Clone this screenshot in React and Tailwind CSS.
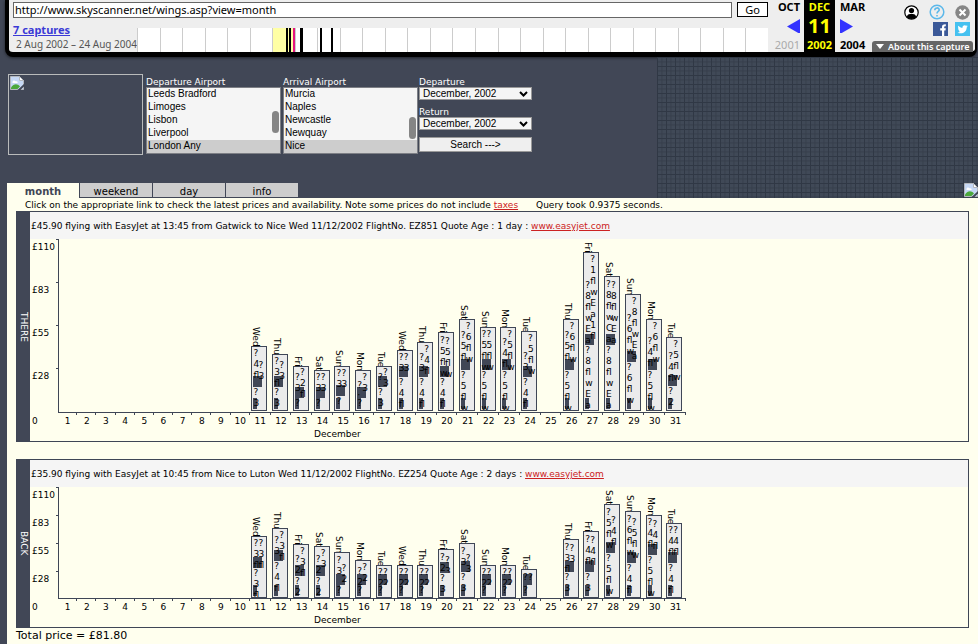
import React from "react";
import clsx from "clsx";

// left / right: [offset of the first line, lines]; foot: height below the dark block
const THERE = [
  { day: 11, name: "Wed", h: 65, left: [7, "? 4 fl"], right: [19, "? 3"], foot: 24, low: "? 3" },
  { day: 12, name: "Thu", h: 57, left: [7, "? 3 fl"], right: [11, "? 3"], foot: 24, low: "? 3" },
  { day: 13, name: "Fri", h: 45, left: [11, "? 3"], right: [6, "? 2 fl"], foot: 13, low: "?" },
  { day: 14, name: "Sat", h: 41, left: [7, "? 3"], right: [7, "? 3"], foot: 13, low: "?" },
  { day: 15, name: "Sun", h: 45, left: [7, "? 3"], right: [7, "? 3"], foot: 15, low: "?" },
  { day: 16, name: "Mon", h: 41, left: [15, "? :"], right: [7, "? 3"], foot: 13, low: "?" },
  { day: 17, name: "Tue", h: 45, left: [11, "? :"], right: [6, "? 3"], foot: 24, low: "? 3" },
  { day: 18, name: "Wed", h: 61, left: [7, "? 3"], right: [7, "? 3"], foot: 34, low: "? 4 fl" },
  { day: 19, name: "Thu", h: 69, left: [15, "? 3"], right: [7, "? 4 fl"], foot: 34, low: "? 4 fl" },
  { day: 20, name: "Fri", h: 79, left: [8, "? 5 fl w"], right: [9, "? 5 fl w"], foot: 34, low: "? 4 fl" },
  { day: 21, name: "Sat", h: 92, left: [16, "? 5 fl"], right: [7, "? 6 fl w"], foot: 41, low: "? 5 fl w" },
  { day: 22, name: "Sun", h: 84, left: [7, "? 5 fl w"], right: [7, "? 5 fl w"], foot: 41, low: "? 5 fl w" },
  { day: 23, name: "Mon", h: 84, left: [15, "? 4 fl"], right: [7, "? 5 fl w"], foot: 41, low: "? 5 fl w" },
  { day: 24, name: "Tue", h: 80, left: [25, "? 3"], right: [7, "? 5 fl w"], foot: 34, low: "? 4 fl" },
  { day: 26, name: "Thu", h: 92, left: [16, "? 5 fl"], right: [7, "? 6 fl w"], foot: 41, low: "? 5 fl w" },
  { day: 27, name: "Fri", h: 159, left: [33, "? 8 fl w E a"], right: [7, "? 1 fl w E a 1 fl"], foot: 66, low: "? 8 fl w E a" },
  { day: 28, name: "Sat", h: 135, left: [8, "? 8 fl w C a"], right: [9, "? 8 fl w E a"], foot: 66, low: "? 8 fl w E a" },
  { day: 29, name: "Sun", h: 117, left: [24, "? 6 fl w"], right: [7, "? 8 fl w E a"], foot: 49, low: "? 6 fl w" },
  { day: 30, name: "Mon", h: 92, left: [22, "? 4 fl"], right: [7, "? 6 fl w"], foot: 41, low: "? 5 fl w" },
  { day: 31, name: "Tue", h: 74, left: [19, "? 4 fl"], right: [7, "? 5 fl w"], foot: 25, low: "? 2" },
];

const BACK = [
  { day: 11, name: "Wed", h: 62, left: [7, "? 3 fl"], right: [7, "? 3 fl"], foot: 30, low: "? 3 fl" },
  { day: 12, name: "Thu", h: 70, left: [12, "? 3"], right: [7, "? 3 fl"], foot: 37, low: "? 4 fl" },
  { day: 13, name: "Fri", h: 54, left: [15, "? 2"], right: [7, "? 3 fl"], foot: 22, low: "? 2" },
  { day: 14, name: "Sat", h: 52, left: [13, "? 2"], right: [7, "? 3"], foot: 22, low: "? 2" },
  { day: 15, name: "Sun", h: 46, left: [8, "? 3"], right: [16, "? 2"], foot: 13, low: "?" },
  { day: 16, name: "Mon", h: 38, left: [11, "? 2"], right: [7, "? 2"], foot: 13, low: "?" },
  { day: 17, name: "Tue", h: 33, left: [7, "? 2"], right: [7, "? 2"], foot: 13, low: "?" },
  { day: 18, name: "Wed", h: 33, left: [7, "? 2"], right: [7, "? 2"], foot: 13, low: "?" },
  { day: 19, name: "Thu", h: 33, left: [7, "? 2"], right: [7, "? 2"], foot: 13, low: "?" },
  { day: 20, name: "Fri", h: 49, left: [8, "? 2"], right: [11, "? 3"], foot: 25, low: "? 3" },
  { day: 21, name: "Sat", h: 55, left: [8, "? 3"], right: [15, "? 3"], foot: 26, low: "? 3" },
  { day: 22, name: "Sun", h: 33, left: [7, "? 2"], right: [7, "? 2"], foot: 13, low: "?" },
  { day: 23, name: "Mon", h: 33, left: [7, "? 2"], right: [7, "? 2"], foot: 13, low: "?" },
  { day: 24, name: "Tue", h: 29, left: [8, "?"], right: [8, "?"], foot: 13, low: "?" },
  { day: 26, name: "Thu", h: 59, left: [8, "? 3 fl"], right: [9, "? 3"], foot: 26, low: "? 3" },
  { day: 27, name: "Fri", h: 67, left: [8, "? 4 fl"], right: [9, "? 4 fl"], foot: 26, low: "? 3" },
  { day: 28, name: "Sat", h: 94, left: [8, "? 5 fl w"], right: [16, "? 4 fl"], foot: 45, low: "? 5 fl w" },
  { day: 29, name: "Sun", h: 87, left: [8, "? 6 fl w"], right: [11, "? 5 fl w"], foot: 35, low: "? 4 fl" },
  { day: 30, name: "Mon", h: 83, left: [7, "? 4 fl"], right: [9, "? 4 fl"], foot: 43, low: "? 5 fl w" },
  { day: 31, name: "Tue", h: 75, left: [7, "? 4 fl"], right: [7, "? 4 fl"], foot: 35, low: "? 4 fl" },
];

const DAYS = Array.from({ length: 31 }, (_, i) => i + 1);
const YEARS = Array.from({ length: 28 }, (_, i) => 1996 + i);

const BrokenImage = () => (
  <svg width="16" height="16" viewBox="0 0 16 16" aria-hidden="true">
    <path d="M1.500 1.500h9l4 4v9h-13z" fill="#c6d8f5" stroke="#b4b8be" />
    <path d="M3.500 7.500c0-2 2-2.500 3-1.200 1.800-.6 2.500.7 2 1.700h-5z" fill="#fff" />
    <path d="M2 14v-1.500c3-4.500 6.500-4 9-1L8.500 14z" fill="#4ba83c" />
    <path d="M10.500 1.500v4h4z" fill="#fff" stroke="#b4b8be" />
    <path d="M8 15.500l7.500-7v2.500L11 15.500z" fill="#414756" />
  </svg>
);

const Lines = ({ text, top = 0, className }) => (
  <div className={clsx("absolute top-0 leading-[11px]", className)} style={{ paddingTop: top }}>
    {text.split(" ").map((t, i) => (
      <div key={i} className="h-[11px]">{t}</div>
    ))}
  </div>
);

const Bar = ({ bar }) => (
  <div className="flex flex-col items-start">
    <span className="-mb-px leading-[11px] [writing-mode:vertical-rl]">{bar.name}</span>
    <div
      className="ml-px flex w-4 flex-col border border-[#3f4656] bg-[#ebebeb]"
      style={{ height: bar.h }}
    >
      <div className="relative flex-1 overflow-hidden">
        <div className="absolute bottom-0 left-px h-[11px] w-[9px] bg-[#414756]" />
        <Lines text={bar.left[1]} top={bar.left[0] - 6} className="left-px" />
        <Lines text={bar.right[1]} top={bar.right[0] - 6} className="left-[6px]" />
      </div>
      <div className="relative overflow-hidden" style={{ height: bar.foot - 1 }}>
        <div className="absolute bottom-px left-px h-[11px] w-1 bg-[#414756]" />
        <Lines text={bar.low} className="left-px" />
      </div>
    </div>
  </div>
);

const days = "grid w-[628px] grid-cols-[repeat(10,12fr)_repeat(21,13fr)]";

const Chart = ({ side, summary, bars, row, plot }) => (
  <section className="mx-[9px] flex border border-[#3f4656]">
    <h2 className="flex w-[13px] items-center justify-center bg-[#414756] text-white">
      <span className="leading-[13px] [writing-mode:vertical-rl]">{side}</span>
    </h2>
    <div className="min-w-0 flex-1">
      <p className="h-[27px] bg-[#f5f5f5] pl-px leading-[28px] whitespace-nowrap">
        {summary}{" "}
        <a href="#easyjet" className="text-[#cc2222] underline">www.easyjet.com</a>
      </p>
      <div className="flex">
        <div className="w-[26px] pl-[2px]">
          {["£110", "£83", "£55", "£28"].map((p) => (
            <div key={p} className={clsx("pt-[2px] leading-[12px]", row)}>{p}</div>
          ))}
        </div>
        <div className="w-[2px]">
          {[1, 2, 3, 4].map((n) => (
            <div key={n} className={clsx("border-t border-[#3f4656]", row)} />
          ))}
        </div>
        <div className={clsx(days, "items-end border-b border-l border-[#3f4656]", plot)}>
          {DAYS.map((d) => {
            const bar = bars.find((b) => b.day === d);
            return bar ? <Bar key={d} bar={bar} /> : <span key={d} />;
          })}
        </div>
      </div>
      <div className="flex">
        <span className="w-[28px] pt-[2px] pl-[2px] leading-[12px]">0</span>
        <div className={clsx(days, "leading-[12px]")}>
          {DAYS.map((d) => (
            <div key={d} className="text-center">
              <div className="ml-auto h-[2px] w-px bg-[#3f4656]" />
              <div>{d}</div>
            </div>
          ))}
        </div>
      </div>
      <div className="ml-[28px] h-[14px] w-[620px] pl-[256px] leading-[14px]">December</div>
    </div>
  </section>
);

const Airports = ({ id, label, options, thumb }) => (
  <div>
    <label htmlFor={id} className="block h-[13px] pt-px leading-[14px] text-white">{label}</label>
    <div className="relative">
      <select
        id={id}
        size={5}
        defaultValue={options[4]}
        className="block h-[67px] w-[135px] appearance-none overflow-hidden border border-[#7d7f85] bg-[#f5f5f5] font-['Liberation_Sans',sans-serif] text-[10px] text-black [scrollbar-width:none]"
      >
        {options.map((o) => (
          <option key={o} className="h-[13px] min-h-0 p-0 pl-px leading-[12px] checked:bg-[#cdcdcd] checked:bg-none checked:text-black">
            {o}
          </option>
        ))}
      </select>
      <span className={clsx("absolute right-[2px] h-[22px] w-[7px] rounded-full bg-[#858585]", thumb)} />
    </div>
  </div>
);

const Month = ({ id, label }) => (
  <div>
    <label htmlFor={id} className="block h-[13px] pt-px leading-[14px] text-white">{label}</label>
    <div className="relative">
      <select
        id={id}
        className="block h-[13px] w-[113px] appearance-none border border-[#999] bg-[#f5f5f5] pl-[3px] font-['Liberation_Sans',sans-serif] text-[10px] leading-[11px] text-black"
      >
        <option>December, 2002</option>
      </select>
      <svg className="pointer-events-none absolute top-1 right-1" width="9" height="6" viewBox="0 0 9 6">
        <path d="M1 1l3.500 3.500L8 1" fill="none" stroke="#000" strokeWidth="2" />
      </svg>
    </div>
  </div>
);

const Marks = () => (
  <svg className="absolute inset-0" width="225" height="24">
    <rect x="149" width="2" height="24" />
    <rect x="152" width="2" height="24" />
    <rect x="156" width="2" height="24" fill="#e6157f" />
    <rect x="163" width="3" height="24" />
    <rect x="183" width="2" height="24" />
    <rect x="194" width="2" height="24" />
  </svg>
);

const ArchiveBar = () => (
  <header className="mr-px ml-[5px] flex h-[57px] rounded-b-lg border-x-4 border-r-2 border-b-[5px] border-black bg-[#eee] font-['Noto_Sans',sans-serif] shadow-[0_1px_3px_#0008]">
    <div className="min-w-0 flex-1">
      <form className="flex gap-[5px] pt-[2px] pl-1">
        <input
          aria-label="Address"
          defaultValue="http://www.skyscanner.net/wings.asp?view=month"
          className="h-4 min-w-0 flex-1 border border-[#666] bg-white pl-px text-[11px] text-black"
        />
        <button type="button" className="h-[15px] w-[31px] border border-black bg-white text-[11px] leading-[13px]">Go</button>
      </form>
      <div className="flex">
        <div className="w-[128px] pt-[5px] pl-1 whitespace-nowrap">
          <a href="#captures" className="block text-[11px] leading-[14px] font-bold text-[#3a3ad6] underline">7 captures</a>
          <p className="pl-[3px] text-[10px] leading-[15px] text-[#555]">2 Aug 2002 – 24 Aug 2004</p>
        </div>
        <div className="relative mt-[10px] flex h-6 flex-1">
          {YEARS.map((y) => (
            <span key={y} className={clsx("flex-1 border-l border-[#ccc]", y === 2002 ? "bg-[#ffffa5]" : "bg-white")} />
          ))}
          <Marks />
        </div>
      </div>
    </div>
    <div className="flex w-[207px] text-[11px] leading-[14px] font-bold">
      <div className="flex w-9 flex-col items-end pr-1">
        <span>OCT</span>
        <svg className="my-[5px]" width="13" height="15"><path d="M13 0v15L0 7.500z" fill="#3333ff" /></svg>
        <span className="font-normal text-[#aaa]">2001</span>
      </div>
      <div className="-mb-px flex w-[31px] flex-col items-center bg-black text-[#ff0]">
        <span>DEC</span>
        <span className="text-[20px] leading-[24px]">11</span>
        <span>2002</span>
      </div>
      <div className="flex w-9 flex-col pl-[5px]">
        <span>MAR</span>
        <svg className="my-[5px]" width="13" height="15"><path d="M0 0v15l13-7.500z" fill="#3333ff" /></svg>
        <span>2004</span>
      </div>
      <div className="flex flex-1 flex-col items-end justify-between">
        <div className="flex flex-col items-end gap-[2px] pt-1 pr-[5px]">
          <div className="flex gap-[10px]">
            <button type="button" aria-label="Account">
              <svg width="15" height="15" viewBox="0 0 15 15">
                <circle cx="7.500" cy="7.500" r="6.700" fill="#fff" stroke="#000" strokeWidth="1.200" />
                <circle cx="7.500" cy="5.600" r="2.600" />
                <path d="M2.800 12c.5-2.400 2-3 3.200-3h3c1.200 0 2.700.6 3.200 3-2.400 2.600-7 2.600-9.400 0z" />
              </svg>
            </button>
            <button type="button" aria-label="Help">
              <svg width="16" height="16" viewBox="0 0 16 16">
                <circle cx="8" cy="8" r="6.800" fill="none" stroke="#5cb8ea" strokeWidth="1.500" />
                <path d="M5.800 6.200c0-3 4.400-3 4.400-.2C10.200 7.500 8 7.500 8 9.500M8 11v1.400" fill="none" stroke="#5cb8ea" strokeWidth="1.600" />
              </svg>
            </button>
            <button type="button" aria-label="Close">
              <svg width="15" height="15" viewBox="0 0 15 15">
                <circle cx="7.500" cy="7.500" r="7.200" fill="#868686" />
                <path d="M4.500 4.500l6 6M10.500 4.500l-6 6" stroke="#fff" strokeWidth="2" />
              </svg>
            </button>
          </div>
          <div className="flex gap-[7px]">
            <a href="#facebook" aria-label="Facebook">
              <svg width="15" height="14" viewBox="0 0 15 14">
                <path d="M0 0h15v14H0z" fill="#3b5998" />
                <path d="M9 14V8.500H7.200V6.300H9V5c0-2 1.200-3 3.800-2.800v2C11.500 4.100 11.200 4.400 11.200 5.200v1.100h1.600l-.3 2.200h-1.300V14z" fill="#fff" />
              </svg>
            </a>
            <a href="#twitter" aria-label="Twitter">
              <svg width="15" height="14" viewBox="0 0 15 14">
                <path d="M0 0h15v14H0z" fill="#45c1f0" />
                <path d="M2.500 10.500c1.300.1 2.200-.2 3-.8-1 0-1.600-.6-1.900-1.300h.9c-1-.4-1.500-1-1.500-2.100l.9.200c-.9-.7-1.100-1.800-.6-2.800C4.500 5 5.900 5.700 7.500 5.800c-.3-2.600 2.400-3.300 3.700-2l1.300-.5-.9 1.200 1.200-.3-1.100 1.200c0 5-5.300 7.300-9.200 5.100z" fill="#fff" />
              </svg>
            </a>
          </div>
        </div>
        <button type="button" className="mr-[2px] flex h-[11px] w-[101px] items-center gap-1 rounded-t-[3px] bg-[#666] pl-1 text-[9px] leading-[11px] font-semibold whitespace-nowrap text-white">
          <svg className="shrink-0" width="8" height="5"><path d="M0 0h8L4 5z" fill="#fff" /></svg>
          About this capture
        </button>
      </div>
    </div>
  </header>
);

export default function App() {
  return (
    <div className="h-screen overflow-hidden bg-[#414756] font-['DejaVu_Sans',sans-serif] text-[9px] text-black">
      <ArchiveBar />
      <div className="flex h-[141px]">
        <div className="flex w-[657px] flex-col justify-between">
          <form className="flex pt-[17px] pl-2">
            <div className="mr-[3px] h-[81px] w-[135px] border border-[#b9bbbb]">
              <BrokenImage />
            </div>
            <Airports
              id="from"
              label="Departure Airport"
              options={["Leeds Bradford", "Limoges", "Lisbon", "Liverpool", "London Any"]}
              thumb="top-[24px]"
            />
            <div className="w-[2px]" />
            <Airports
              id="to"
              label="Arrival Airport"
              options={["Murcia", "Naples", "Newcastle", "Newquay", "Nice"]}
              thumb="top-[30px]"
            />
            <div className="ml-px flex flex-col">
              <Month id="out" label="Departure" />
              <div className="h-1" />
              <Month id="return" label="Return" />
              <button type="button" className="mt-[7px] h-[15px] w-[113px] border border-[#999] bg-[#efefef] font-['Liberation_Sans',sans-serif] text-[10px] leading-[12px]">
                {"Search --->"}
              </button>
            </div>
          </form>
          <nav className="flex gap-px pl-[7px] text-[10px]">
            <button type="button" className="h-[15px] w-[72px] bg-[#ffffee] pt-px font-bold text-[#3f4656]">month</button>
            {["weekend", "day", "info"].map((t) => (
              <button key={t} type="button" className="mb-px h-[14px] w-[72px] bg-[#cdcdcd] pt-px">{t}</button>
            ))}
          </nav>
        </div>
        <div className="flex flex-1 items-end justify-end bg-[#404957] bg-[linear-gradient(to_right,#303845_1px,transparent_1px),linear-gradient(to_bottom,#303845_1px,transparent_1px),linear-gradient(to_right,#363e4b_1px,transparent_1px),linear-gradient(to_bottom,#363e4b_1px,transparent_1px)] bg-size-[9px_9px,9px_9px,4.500px_4.500px,4.500px_4.500px]">
          <div className="w-[15px] overflow-hidden"><BrokenImage /></div>
        </div>
      </div>
      <main className="ml-[7px] h-full bg-[#ffffee]">
        <p className="flex h-[13px] gap-[18px] pl-[18px] leading-[14px] whitespace-nowrap">
          <span>
            Click on the appropriate link to check the latest prices and availability. Note some prices do not include{" "}
            <a href="#taxes" className="text-[#cc2222] underline">taxes</a>
          </span>
          <span>Query took 0.9375 seconds.</span>
        </p>
        <Chart
          side="THERE"
          summary="£45.90 flying with EasyJet at 13:45 from Gatwick to Nice Wed 11/12/2002 FlightNo. EZ851 Quote Age : 1 day :"
          bars={THERE}
          row="h-[43px]"
          plot="h-[174px] pb-px"
        />
        <div className="h-[17px]" />
        <Chart
          side="BACK"
          summary="£35.90 flying with EasyJet at 10:45 from Nice to Luton Wed 11/12/2002 FlightNo. EZ254 Quote Age : 2 days :"
          bars={BACK}
          row="h-7"
          plot="h-[112px]"
        />
        <p className="pl-[9px] text-[11px] leading-[15px]">Total price = £81.80</p>
      </main>
    </div>
  );
}
